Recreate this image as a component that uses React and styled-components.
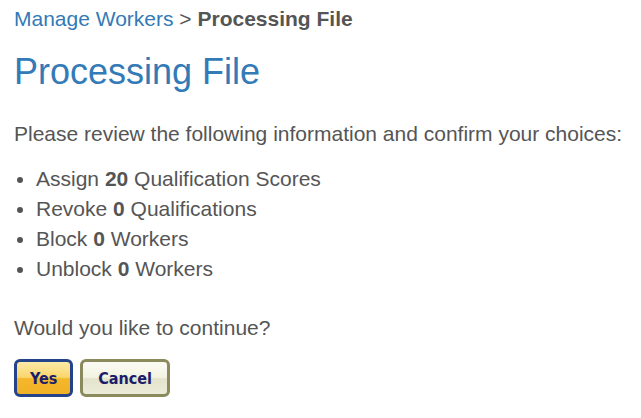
import React from "react";
import styled, { createGlobalStyle } from "styled-components";

const Global = createGlobalStyle`
  body { margin: 0; background: #fff; font-family: "Liberation Sans", Arial, sans-serif; color: #555; }
`;

const Page = styled.div`
  padding: 4px 14px;
  font-size: 21px;
  line-height: 30px;
`;

const Crumbs = styled.div`
  color: #555;
`;

const Link = styled.a`
  color: #337ab7;
  text-decoration: none;
`;

const Title = styled.h1`
  margin: 18px 0 27px;
  font-size: 36px;
  font-weight: normal;
  color: #337ab7;
  line-height: 40px;
`;

const Para = styled.p`
  margin: 0 0 ${(p) => p.$after}px;
`;

const List = styled.ul`
  margin: 0 0 29px;
  padding-left: 22px;
  li { line-height: 30px; }
`;

const Buttons = styled.div`
  display: flex;
  gap: 7px;
`;

const Btn = styled.button`
  height: 38px;
  padding: 0 ${(p) => p.$pad}px;
  border-radius: 6px;
  border: 3px solid ${(p) => (p.$primary ? "#24438a" : "#8a8a5c")};
  background: ${(p) =>
    p.$primary
      ? "linear-gradient(#fdeaa8 0%, #fad56c 48%, #f4b72c 52%, #f1b126 100%)"
      : "linear-gradient(#fbfbf4 0%, #f3f3e2 48%, #e4e4cc 52%, #ebebd9 100%)"};
  font-family: "DejaVu Sans Condensed", "DejaVu Sans", sans-serif;
  font-weight: bold;
  font-size: 16px;
  color: #1c1c6b;
  cursor: pointer;
`;

export default function App() {
  return (
    <Page>
      <Global />
      <Crumbs>
        <Link href="#">Manage Workers</Link> &gt; <b>Processing File</b>
      </Crumbs>
      <Title>Processing File</Title>
      <Para $after={15}>Please review the following information and confirm your choices:</Para>
      <List>
        <li>Assign <b>20</b> Qualification Scores</li>
        <li>Revoke <b>0</b> Qualifications</li>
        <li>Block <b>0</b> Workers</li>
        <li>Unblock <b>0</b> Workers</li>
      </List>
      <Para $after={16}>Would you like to continue?</Para>
      <Buttons>
        <Btn $primary $pad={13}>Yes</Btn>
        <Btn $pad={15}>Cancel</Btn>
      </Buttons>
    </Page>
  );
}
